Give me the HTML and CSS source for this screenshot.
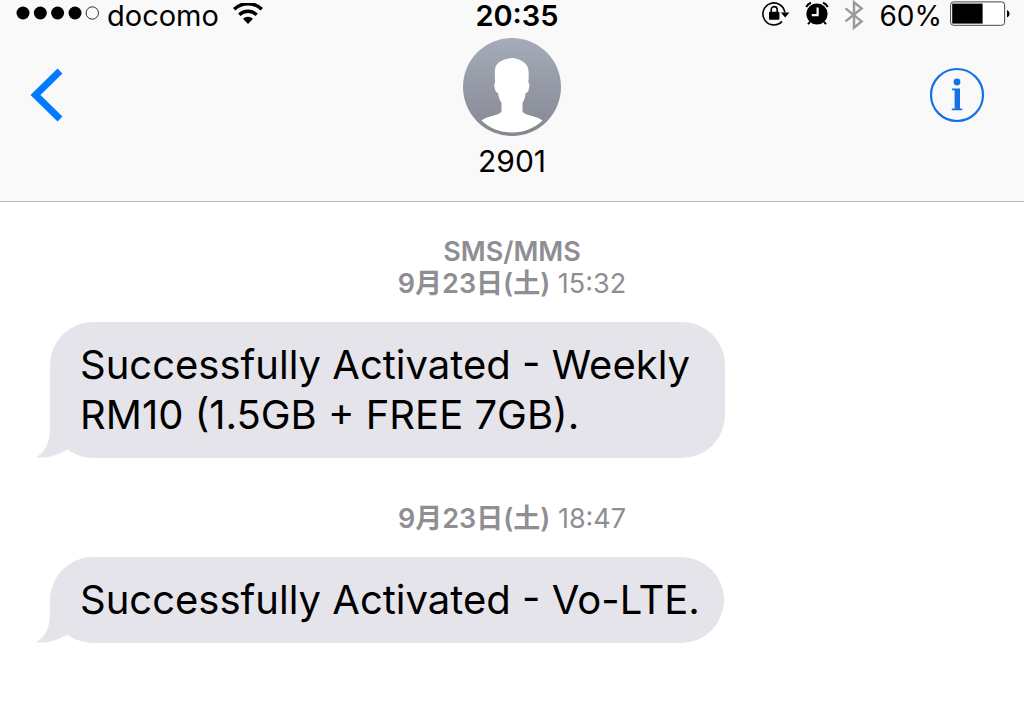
FILE: index.html
```html
<!DOCTYPE html>
<html lang="ja">
<head>
    <meta charset="UTF-8">
    <meta name="viewport" content="width=device-width, initial-scale=1.0">
    <title>2901</title>
    <link rel="stylesheet" href="styles.css">
</head>
<body>
    <header class="header">
        <div class="status">
            <div class="status-left">
                <svg class="signal" width="84" height="20" viewBox="0 0 84 20">
                    <circle cx="7" cy="7" r="6.5"/>
                    <circle cx="24.3" cy="7" r="6.5"/>
                    <circle cx="41.6" cy="7" r="6.5"/>
                    <circle cx="59" cy="7" r="6.5"/>
                    <circle cx="76.3" cy="7" r="6.2" fill="none" stroke="#000" stroke-width="0.8"/>
                </svg>
                <span>docomo</span>
                <svg class="wifi" width="30" height="26" viewBox="0 0 30 26">
                    <path d="M1.2 6.2a20 20 0 0 1 27.6 0" fill="none" stroke="#000" stroke-width="3.4"/>
                    <path d="M6.3 11.8a12.6 12.6 0 0 1 17.4 0" fill="none" stroke="#000" stroke-width="3.4"/>
                    <path d="M15 21l-5-5.2a7.4 7.4 0 0 1 10 0z"/>
                </svg>
            </div>
            <div class="time">20:35</div>
            <div class="status-right">
                <svg class="lock" width="28" height="30" viewBox="0 0 28 30">
                    <path d="M22.8 11.4a11 11 0 1 0-2.8 9" fill="none" stroke="#000" stroke-width="1.6"/>
                    <path d="M18.8 11.4h8.6l-4.2 5z"/>
                    <rect x="7" y="10.8" width="10.4" height="8" rx="0.8"/>
                    <path d="M9.2 11.4V8.6a3 3 0 0 1 6 0v2.8" fill="none" stroke="#000" stroke-width="1.6"/>
                </svg>
                <svg class="alarm" width="24" height="30" viewBox="0 0 24 30">
                    <circle cx="12" cy="13" r="10.6"/>
                    <path d="M1.2 6A9 9 0 0 1 6 1.8M22.8 6A9 9 0 0 0 18 1.8" fill="none" stroke="#000" stroke-width="2"/>
                    <path d="M5 21l-2 2.2M19 21l2 2.2" stroke="#000" stroke-width="2"/>
                    <path d="M12.6 6.4v7.8H6.8" fill="none" stroke="#f9f9f9" stroke-width="2.2"/>
                </svg>
                <svg class="bluetooth" width="20" height="32" viewBox="0 0 20 32">
                    <path d="M1.5 8.4L17.6 21.4 10 27.6V2.2l7.6 6.2L1.5 21.4" fill="none" stroke="#999" stroke-width="2.4"/>
                </svg>
                <span class="percent">60%</span>
                <svg class="battery" width="60" height="30" viewBox="0 0 60 30">
                    <rect x="0.6" y="0.9" width="54" height="23.4" rx="3" fill="#fff" stroke="#333" stroke-width="0.9"/>
                    <rect x="2.2" y="2.6" width="30.4" height="20"/>
                    <path d="M57 9q2.6 1 2.6 3.7T57 16.5z"/>
                </svg>
            </div>
        </div>

        <div class="nav">
            <button class="back" type="button" aria-label="Back">
                <svg width="34" height="54" viewBox="0 0 34 54">
                    <path d="M30 3L5.5 27 30 51" fill="none" stroke="#007aff" stroke-width="7"/>
                </svg>
            </button>
            <div class="contact">
                <svg class="avatar" width="98" height="98" viewBox="0 0 98 98">
                    <defs>
                        <linearGradient id="avatar-fill" x1="0" y1="0" x2="0" y2="1">
                            <stop offset="0" stop-color="#a5abb9"/>
                            <stop offset="1" stop-color="#858892"/>
                        </linearGradient>
                    </defs>
                    <circle cx="49" cy="49" r="49" fill="url(#avatar-fill)"/>
                    <path d="M49 20c-7 1-14 3-16.5 9-1 4-.8 10-.3 15.500-1.800.8-.8 5 .2 8 .6 1.800 1.400 2.300 2.600 2.300.5 4 1.500 7.500 3.500 10v9.200C34 78 24 78 18.500 82.500 26 90 37 94.500 49 94.500S72 90 79.500 82.500C74 78 64 78 59.500 74v-9.200c2-2.500 2.700-6 3.200-10 1.400 0 2.200-.8 2.800-2.600.8-3 1.600-7-.2-7.700.5-5.500.7-11-.3-14.500C63 24 56 20.500 49 20z" fill="#fff"/>
                </svg>
                <h1 class="name">2901</h1>
            </div>
            <button class="info" type="button" aria-label="Details">
                <svg width="56" height="56" viewBox="0 0 56 56">
                    <circle cx="28" cy="28" r="26" fill="none" stroke="#1272e6" stroke-width="2.2"/>
                    <circle cx="28" cy="15" r="3.4" fill="#1272e6"/>
                    <path d="M23 21.6h8v20h2.2v1.600H22.800v-1.600h2.800V23.200H23z" fill="#1272e6"/>
                </svg>
            </button>
        </div>
    </header>

    <main class="thread">
        <div class="stamp">
            <p><strong>SMS/MMS</strong></p>
            <p><strong>9月23日(土)</strong> 15:32</p>
        </div>
        <div class="bubble">
            Successfully Activated - Weekly RM10 (1.5GB + FREE 7GB).
            <svg class="tail" width="34" height="44" viewBox="0 0 34 44">
                <path d="M14 0v14c0 12-3 23-14 29.400 12 1 23-2.400 32-8.400z"/>
            </svg>
        </div>

        <div class="stamp">
            <p><strong>9月23日(土)</strong> 18:47</p>
        </div>
        <div class="bubble">
            Successfully Activated - Vo-LTE.
            <svg class="tail" width="34" height="44" viewBox="0 0 34 44">
                <path d="M14 0v14c0 12-3 23-14 29.400 12 1 23-2.400 32-8.400z"/>
            </svg>
        </div>
    </main>
</body>
</html>
```

FILE: styles.css
```css
* {
    margin: 0;
    padding: 0;
    box-sizing: border-box;
}

body {
    font-family: Inter, "Noto Sans CJK JP", sans-serif;
    color: #000;
    background: #fff;
}

svg {
    display: block;
    flex: none;
}

button {
    background: none;
    border: none;
    cursor: pointer;
}

.header {
    background: #f9f9f9;
    border-bottom: 1px solid #b9b9bb;
    padding-bottom: 22px;
}

.status {
    display: grid;
    grid-template-columns: 1fr auto 1fr;
    align-items: center;
    padding: 0 14px 0 16px;
    font-size: 29px;
    line-height: 32px;
}

.status-left,
.status-right {
    display: flex;
    align-items: center;
}

.status-left {
    gap: 7px;
}

.status-right {
    justify-content: flex-end;
    gap: 15px;
}

.wifi {
    margin-left: 7px;
}

.percent {
    font-size: 28px;
}

.battery {
    margin-left: -7px;
}

.time {
    padding-left: 8px;
    font-weight: 600;
}

.nav {
    display: grid;
    grid-template-columns: 1fr auto 1fr;
    align-items: start;
    padding: 6px 30px 0;
}

.back {
    justify-self: start;
    margin-top: 30px;
}

.info {
    justify-self: end;
    margin-top: 29px;
    margin-right: 9px;
}

.contact {
    display: flex;
    flex-direction: column;
    align-items: center;
    gap: 8px;
}

.name {
    font-size: 30px;
    font-weight: 400;
    line-height: 35px;
}

.thread {
    padding: 34px 50px;
}

.stamp {
    color: #8e8e93;
    font-size: 27px;
    line-height: 32px;
    text-align: center;
}

.stamp strong {
    font-weight: 600;
}

.bubble {
    position: relative;
    width: fit-content;
    max-width: 73%;
    margin: 22px 0 45px;
    padding: 18px 24px 18px 30px;
    border-radius: 43px;
    background: #e5e4ea;
    font-size: 40px;
    line-height: 50px;
}

.tail {
    position: absolute;
    left: -14px;
    bottom: 0;
    fill: #e5e4ea;
}
```
